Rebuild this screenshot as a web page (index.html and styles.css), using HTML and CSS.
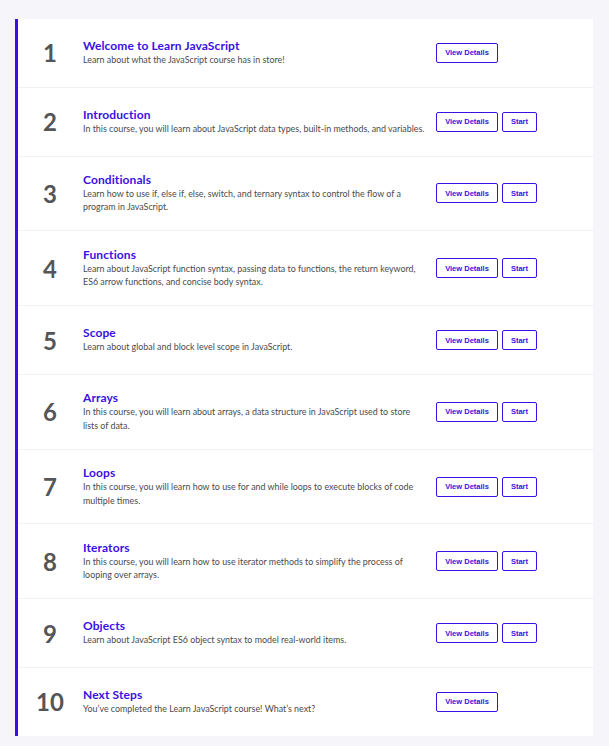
FILE: index.html
```html
<!DOCTYPE html>
<html lang="en">
<head>
<meta charset="utf-8">
<title>Learn JavaScript</title>
<link rel="stylesheet" href="styles.css">
</head>
<body>
<main class="card">
  <div class="row">
    <div class="num">1</div>
    <div class="info">
      <h3 class="title">Welcome to Learn JavaScript</h3>
      <p class="desc">Learn about what the JavaScript course has in store!</p>
    </div>
    <div class="actions"><button class="btn btn-wide">View Details</button></div>
  </div>
  <div class="row">
    <div class="num">2</div>
    <div class="info">
      <h3 class="title">Introduction</h3>
      <p class="desc">In this course, you will learn about JavaScript data types, built-in methods, and variables.</p>
    </div>
    <div class="actions"><button class="btn btn-wide">View Details</button><button class="btn">Start</button></div>
  </div>
  <div class="row">
    <div class="num">3</div>
    <div class="info">
      <h3 class="title">Conditionals</h3>
      <p class="desc">Learn how to use if, else if, else, switch, and ternary syntax to control the flow of a program in JavaScript.</p>
    </div>
    <div class="actions"><button class="btn btn-wide">View Details</button><button class="btn">Start</button></div>
  </div>
  <div class="row">
    <div class="num">4</div>
    <div class="info">
      <h3 class="title">Functions</h3>
      <p class="desc">Learn about JavaScript function syntax, passing data to functions, the return keyword, ES6 arrow functions, and concise body syntax.</p>
    </div>
    <div class="actions"><button class="btn btn-wide">View Details</button><button class="btn">Start</button></div>
  </div>
  <div class="row">
    <div class="num">5</div>
    <div class="info">
      <h3 class="title">Scope</h3>
      <p class="desc">Learn about global and block level scope in JavaScript.</p>
    </div>
    <div class="actions"><button class="btn btn-wide">View Details</button><button class="btn">Start</button></div>
  </div>
  <div class="row">
    <div class="num">6</div>
    <div class="info">
      <h3 class="title">Arrays</h3>
      <p class="desc">In this course, you will learn about arrays, a data structure in JavaScript used to store lists of data.</p>
    </div>
    <div class="actions"><button class="btn btn-wide">View Details</button><button class="btn">Start</button></div>
  </div>
  <div class="row">
    <div class="num">7</div>
    <div class="info">
      <h3 class="title">Loops</h3>
      <p class="desc">In this course, you will learn how to use for and while loops to execute blocks of code multiple times.</p>
    </div>
    <div class="actions"><button class="btn btn-wide">View Details</button><button class="btn">Start</button></div>
  </div>
  <div class="row">
    <div class="num">8</div>
    <div class="info">
      <h3 class="title">Iterators</h3>
      <p class="desc">In this course, you will learn how to use iterator methods to simplify the process of looping over arrays.</p>
    </div>
    <div class="actions"><button class="btn btn-wide">View Details</button><button class="btn">Start</button></div>
  </div>
  <div class="row">
    <div class="num">9</div>
    <div class="info">
      <h3 class="title">Objects</h3>
      <p class="desc">Learn about JavaScript ES6 object syntax to model real-world items.</p>
    </div>
    <div class="actions"><button class="btn btn-wide">View Details</button><button class="btn">Start</button></div>
  </div>
  <div class="row">
    <div class="num">10</div>
    <div class="info">
      <h3 class="title">Next Steps</h3>
      <p class="desc">You’ve completed the Learn JavaScript course! What’s next?</p>
    </div>
    <div class="actions"><button class="btn btn-wide">View Details</button></div>
  </div>
</main>
</body>
</html>
```
FILE: styles.css
```css
* { box-sizing: border-box; }
html, body { margin: 0; padding: 0; }
body {
  background: #f5f5fa;
  font-family: Lato, "Liberation Sans", sans-serif;
  padding: 19px 16px 10px 15px;
}
.card {
  background: #ffffff;
  border-left: 3px solid #3a10e5;
  display: flex;
  flex-direction: column;
}
.row {
  display: flex;
  align-items: center;
  padding: 16.4px 0;
  border-bottom: 1px solid #f2f2f4;
}
.row:last-child { border-bottom: none; }
.num {
  width: 64px;
  flex: none;
  text-align: center;
  font-size: 24px;
  font-weight: 700;
  color: #555558;
  line-height: 35px;
}
.info {
  flex: none;
  width: 353px;
  margin-left: 1px;
  padding-right: 10px;
}
.title {
  margin: 0;
  font-size: 12px;
  line-height: 14px;
  font-weight: 700;
  color: #3a10e5;
  letter-spacing: 0.1px;
}
.desc {
  margin: 0;
  font-size: 8.9px;
  line-height: 13.5px;
  color: #4a4a4d;
}
.actions {
  display: flex;
  gap: 4px;
}
.btn {
  font-family: "Liberation Sans", sans-serif;
  font-size: 7.5px;
  font-weight: 700;
  color: #3a10e5;
  background: #fff;
  border: 1.5px solid #3a10e5;
  border-radius: 2px;
  height: 20px;
  width: 35px;
  padding: 0;
}
.btn-wide { width: 62px; }
```
